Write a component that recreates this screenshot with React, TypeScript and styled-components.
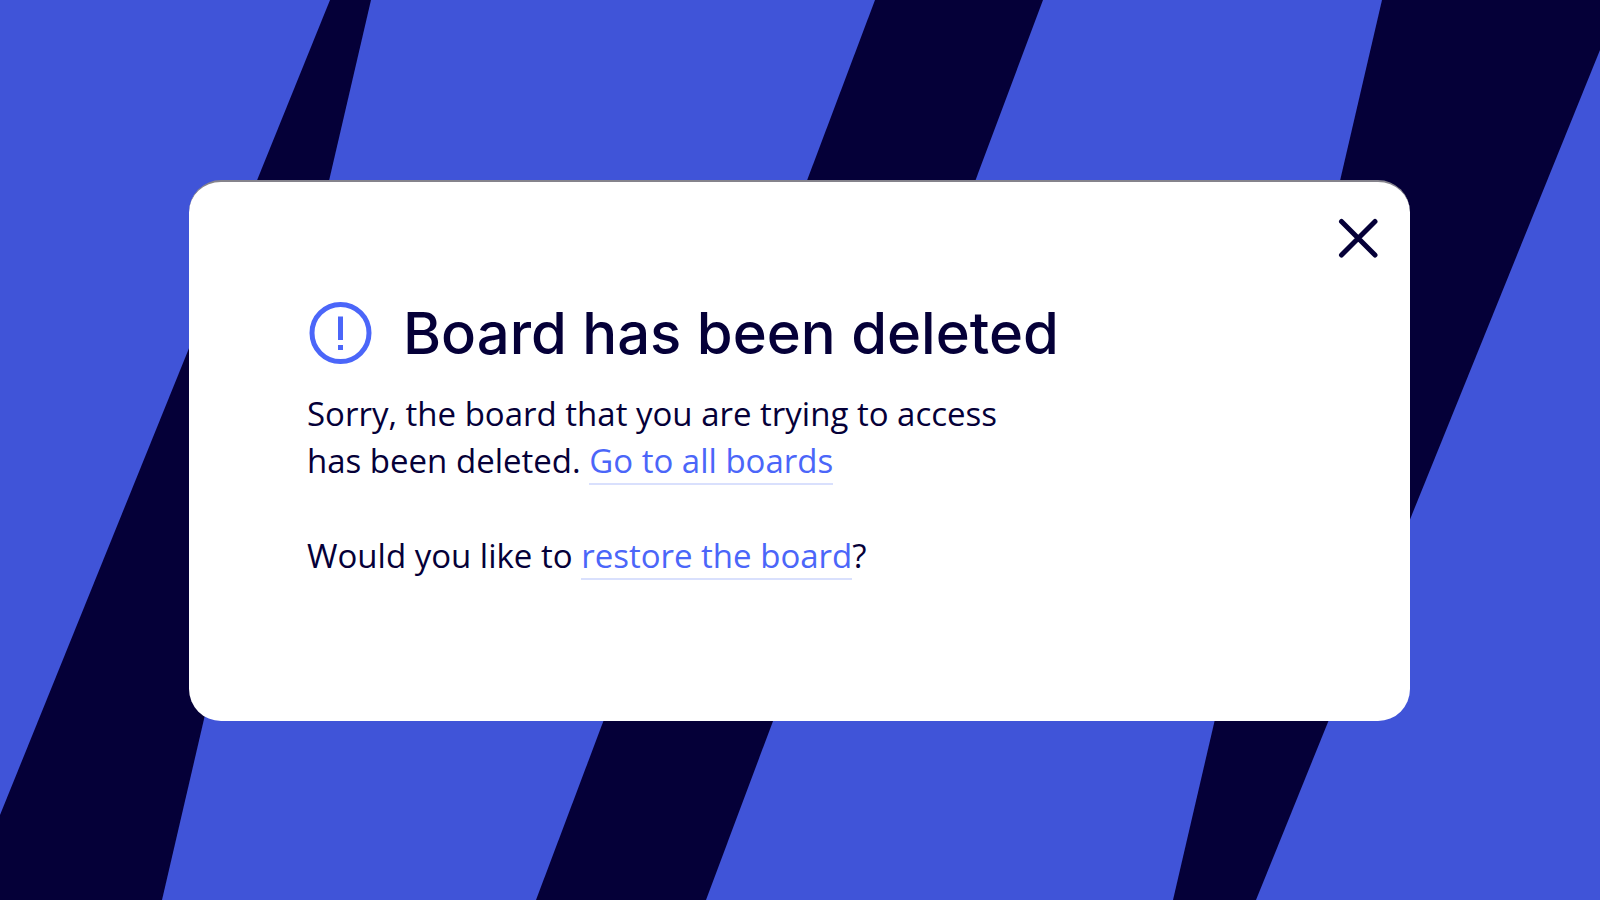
import React from "react";
import styled, { createGlobalStyle } from "styled-components";

const colors = {
  night: "#050038",
  blue: "#4054d8",
  link: "#4b66f9",
  underline: "#d9e0fd",
};

const GlobalStyle = createGlobalStyle`
  *, *::before, *::after {
    box-sizing: border-box;
  }

  body {
    margin: 0;
    background: ${colors.night};
    color: ${colors.night};
    font-family: "Open Sans", "Noto Sans", sans-serif;
  }
`;

const Page = styled.main`
  position: relative;
  display: flex;
  align-items: center;
  min-height: 100vh;
  padding: 25px 190px 24px 189px;

  @media (max-width: 1100px) {
    padding: 24px;
  }
`;

const Backdrop = styled.svg`
  position: absolute;
  inset: 0;
  width: 100%;
  height: 100%;
`;

const Dialog = styled.section`
  position: relative;
  flex: 1;
  padding: 29px 25px 94px 118px;
  border-top: 2px solid #85838c;
  border-radius: 32px;
  background: #ffffff;

  @media (max-width: 1100px) {
    padding-left: 40px;
  }
`;

const DialogBar = styled.div`
  display: flex;
  justify-content: flex-end;
`;

const CloseButton = styled.button`
  display: flex;
  padding: 4px;
  border: 0;
  background: none;
  color: inherit;
  cursor: pointer;
`;

const TitleRow = styled.div`
  display: flex;
  align-items: center;
  gap: 30px;
  margin: 34px 0 23px;
`;

const AlertIcon = styled.svg`
  flex: none;
  width: 66px;
  height: 66px;
  color: ${colors.link};
`;

const Title = styled.h1`
  margin: 0;
  font-family: Inter, "Liberation Sans", sans-serif;
  font-size: 58px;
  font-weight: 500;
  line-height: 68px;
`;

const Message = styled.p`
  max-width: 740px;
  margin: 0 0 48px;
  font-size: 33px;
  line-height: 47px;
`;

const TextLink = styled.a`
  border-bottom: 2px solid ${colors.underline};
  color: ${colors.link};
  text-decoration: none;
`;

export default function App() {
  return (
    <>
      <GlobalStyle />
      <Page>
        <Backdrop viewBox="0 0 1600 900" preserveAspectRatio="none" aria-hidden="true">
          <g fill={colors.blue}>
            <path d="M0 0H330L0 815Z" />
            <path d="M371 0H875L536 900H162Z" />
            <path d="M1043 0H1382L1173 900H706Z" />
            <path d="M1600 50V900H1256Z" />
          </g>
        </Backdrop>
        <Dialog role="dialog" aria-labelledby="dialog-title">
          <DialogBar>
            <CloseButton type="button" aria-label="Close">
              <svg width="46" height="46" viewBox="0 0 46 46" fill="none" stroke="currentColor" strokeWidth="5" strokeLinecap="round" aria-hidden="true">
                <path d="M6.5 6.5L40 40M40 6.5L6.5 40" />
              </svg>
            </CloseButton>
          </DialogBar>
          <TitleRow>
            <AlertIcon viewBox="0 0 66 66" aria-hidden="true">
              <circle cx="33.5" cy="33" r="28.5" fill="none" stroke="currentColor" strokeWidth="5" />
              <path d="M31 16.5H36V40H31ZM31 45H36V50H31Z" fill="currentColor" />
            </AlertIcon>
            <Title id="dialog-title">Board has been deleted</Title>
          </TitleRow>
          <Message>
            Sorry, the board that you are trying to access
            <br />
            has been deleted. <TextLink href="#boards">Go to all boards</TextLink>
          </Message>
          <Message>
            Would you like to <TextLink href="#restore">restore the board</TextLink>?
          </Message>
        </Dialog>
      </Page>
    </>
  );
}
